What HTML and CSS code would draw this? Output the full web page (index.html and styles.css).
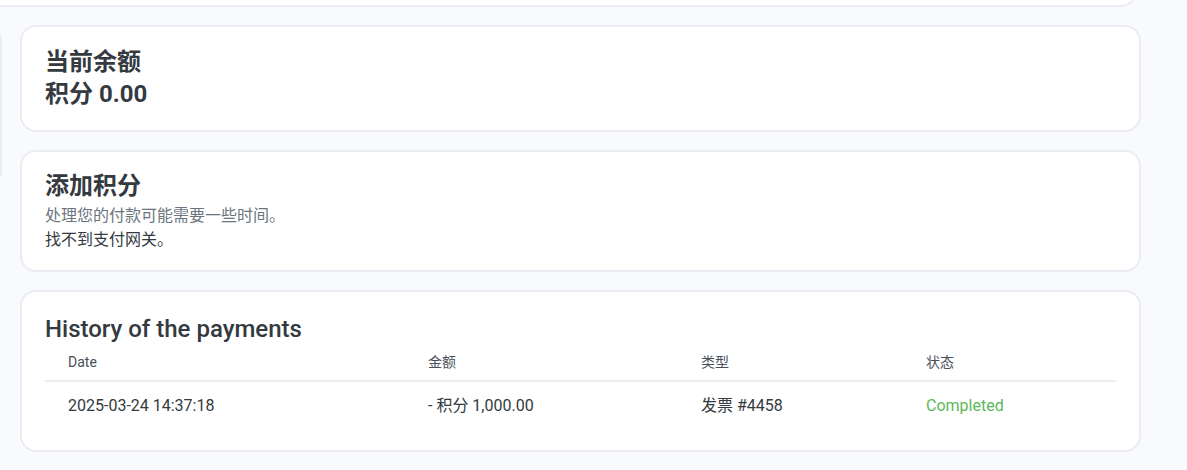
FILE: index.html
```html
<!DOCTYPE html>
<html lang="zh">
<head>
<meta charset="utf-8">
<title>Balance</title>
<link rel="stylesheet" href="styles.css">
</head>
<body>
<div class="page">
  <div class="card top-card"></div>
  <div class="layout">
    <div class="card side-card"></div>
    <div class="main">
      <section class="card balance">
        <h2 class="title">当前余额</h2>
        <div class="title">积分 0.00</div>
      </section>
      <section class="card add">
        <h2 class="title">添加积分</h2>
        <p class="muted">处理您的付款可能需要一些时间。</p>
        <p class="note">找不到支付网关。</p>
      </section>
      <section class="card history">
        <h2 class="title latin">History of the payments</h2>
        <table class="table">
          <colgroup>
            <col class="c1"><col class="c2"><col class="c3"><col class="c4">
          </colgroup>
          <thead>
            <tr><th>Date</th><th>金额</th><th>类型</th><th>状态</th></tr>
          </thead>
          <tbody>
            <tr><td>2025-03-24 14:37:18</td><td>- 积分 1,000.00</td><td>发票 #4458</td><td class="ok">Completed</td></tr>
          </tbody>
        </table>
      </section>
    </div>
  </div>
</div>
</body>
</html>
```

FILE: styles.css
```css
html, body {
  margin: 0;
  padding: 0;
  background: #f9fafd;
  overflow: hidden;
}
body {
  font-family: Roboto, "Noto Sans CJK SC", sans-serif;
  color: #343a40;
}
.page {
  padding-left: 20px;
}
.card {
  background: #fff;
  border: 2px solid #eaecf1;
  border-radius: 16px;
  box-sizing: border-box;
}
.top-card {
  height: 60px;
  margin-top: -53px;
  margin-left: -40px;
  width: 1157px;
  margin-bottom: 18px;
}
.layout {
  display: flex;
  gap: 18px;
  align-items: flex-start;
}
.side-card {
  flex: none;
  width: 200px;
  height: 162px;
  margin-left: -218px;
}
.main {
  display: flex;
  flex-direction: column;
  gap: 18px;
  width: 1121px;
  flex: none;
}
.title {
  margin: 0;
  font-size: 24px;
  line-height: 32px;
  font-weight: 700;
  color: #343a40;
}
.title.latin {
  font-weight: 500;
}
.balance {
  padding: 19px 23px 20px;
}
.add {
  padding: 18px 23px 20px;
}
.muted, .note {
  margin: 0;
  font-size: 16px;
  line-height: 24px;
  font-family: "Noto Sans CJK SC", Roboto, sans-serif;
}
.muted {
  color: #6c757d;
}
.note {
  color: #343a40;
}
.history {
  padding: 21px 23px 22px;
}
.table {
  width: 100%;
  border-collapse: collapse;
  margin-top: 3px;
  table-layout: fixed;
}
.c1 { width: 360px; }
.c2 { width: 273px; }
.c3 { width: 225px; }
.c4 { width: auto; }
.table th {
  text-align: left;
  font-weight: 400;
  font-size: 14px;
  line-height: 20px;
  color: #495057;
  padding: 4px 23px 8px;
  border-bottom: 2px solid #e9ecf0;
}
.table td {
  font-size: 16px;
  line-height: 22px;
  color: #343a40;
  padding: 13px 23px 11px;
}
.table td.ok {
  color: #5cb85c;
}
```
